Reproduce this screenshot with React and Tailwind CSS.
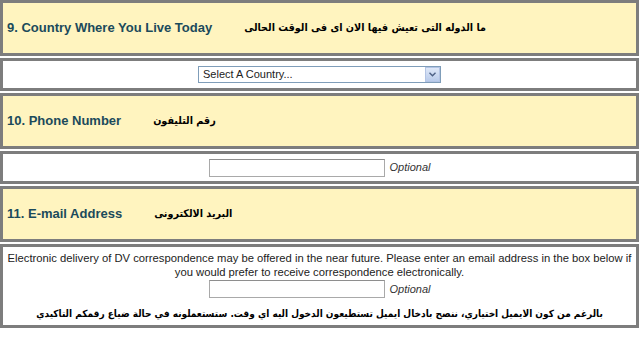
import React from 'react';

const ar = "'DejaVu Sans Condensed', 'DejaVu Sans', sans-serif";

function HeaderRow({ label, arabic }) {
  return (
    <div className="h-[56px] border-[3px] border-[#7d7d7d] bg-[#fff4bf] flex items-center pl-[4px] gap-[32px]">
      <span className="text-[13px] font-bold text-[#1b4a5b]">{label}</span>
      <span dir="rtl" className="text-[10.7px] font-bold text-black" style={{ fontFamily: ar }}>
        {arabic}
      </span>
    </div>
  );
}

function TextInput() {
  return (
    <div className="flex items-center gap-[5px]">
      <div className="w-[176px] h-[18px] border border-[#a9a9a9] border-t-[#8e8e8e] bg-white" />
      <span className="italic text-[11px] text-[#333]">Optional</span>
    </div>
  );
}

function App() {
  return (
    <div className="w-[640px] h-[353px] bg-white font-['Liberation_Sans',Arial,sans-serif] text-[#222]">
      <div className="w-[639px] flex flex-col gap-[2px]">
        <HeaderRow label="9. Country Where You Live Today" arabic="ما الدوله التى تعيش فيها الان اى فى الوقت الحالى" />

        <div className="h-[33px] border-[3px] border-[#7d7d7d] bg-white flex items-center justify-center">
          <div className="w-[243px] h-[17px] border border-[#7f9db9] bg-white flex items-center justify-between">
            <span className="pl-[4px] text-[11px] text-[#222]">Select A Country...</span>
            <div className="w-[15px] h-[15px] bg-gradient-to-b from-[#dfe8f8] to-[#b9cbea] border border-[#b3c4e4] flex items-center justify-center">
              <svg width="7" height="5" viewBox="0 0 7 5">
                <path d="M0.5 0.8 L3.5 3.8 L6.5 0.8" fill="none" stroke="#4d6185" strokeWidth="1.4" />
              </svg>
            </div>
          </div>
        </div>

        <HeaderRow label="10. Phone Number" arabic="رقم التليفون" />

        <div className="h-[33px] border-[3px] border-[#7d7d7d] bg-white flex items-center justify-center">
          <TextInput />
        </div>

        <HeaderRow label="11. E-mail Address" arabic="البريد الالكترونى" />

        <div className="h-[84px] border-[3px] border-[#7d7d7d] bg-white flex flex-col items-center pt-[4px]">
          <p className="text-[11.25px] leading-[14px] text-center text-[#222]">
            Electronic delivery of DV correspondence may be offered in the near future. Please enter an email address in the box below if you would prefer to receive correspondence electronically.
          </p>
          <div className="mt-[1px]">
            <TextInput />
          </div>
          <p dir="rtl" className="mt-[8px] text-[10px] leading-[15px] font-bold text-black whitespace-nowrap" style={{ fontFamily: ar }}>
            بالرغم من كون الايميل اختياري، ننصح بادخال ايميل تستطيعون الدخول اليه اي وقت. ستستعملونه في حالة ضياع رقمكم التاكيدي
          </p>
        </div>
      </div>
    </div>
  );
}

export default App;
